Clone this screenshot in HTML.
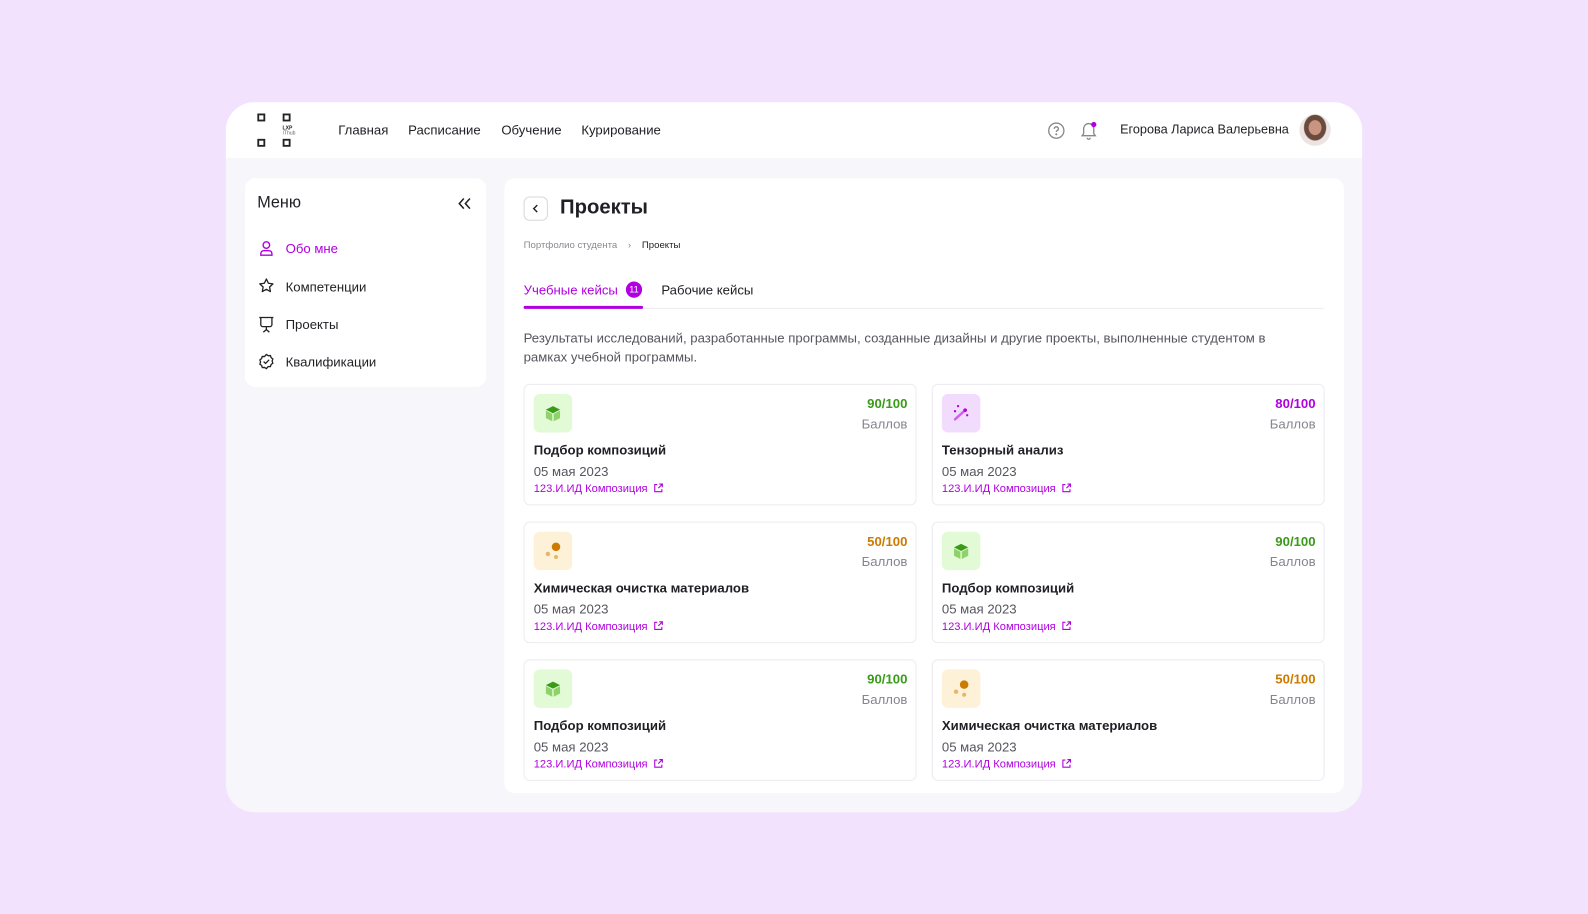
<!DOCTYPE html>
<html><head><meta charset="utf-8"><style>
*{box-sizing:border-box;margin:0;padding:0}
body{width:1588px;height:913px;background:#f2e2fd;font-family:"Liberation Sans",sans-serif;color:#1f1f24;position:relative;overflow:hidden}
#w{position:absolute;left:0;top:0;width:1568px;height:902px;transform:scale(1.01276);transform-origin:0 0}
.app{position:absolute;left:223px;top:101px;width:1122px;height:701px;background:#f7f7fb;border-radius:28px;overflow:hidden}
.hdr{position:absolute;left:0;top:0;width:1122px;height:55px;background:#fff}
.nav{position:absolute;top:20px;font-size:13px;color:#1f1f24}
.side{position:absolute;left:19px;top:75px;width:238px;height:206px;background:#fff;border-radius:10px}
.main{position:absolute;left:275px;top:75px;width:829px;height:607px;background:#fff;border-radius:10px}
.mi{position:absolute;left:40px;font-size:13px}
.card{position:absolute;width:388px;height:120px;border:1px solid #ececf1;border-radius:6px;background:#fff}
.ic{position:absolute;left:9px;top:9px;width:38px;height:38px;border-radius:6px}
.sc{position:absolute;right:8px;top:11px;font-size:13px;font-weight:bold;text-align:right}
.bl{position:absolute;right:8px;top:31px;font-size:13px;color:#85858f}
.tt{position:absolute;left:9px;top:57px;font-size:13px;font-weight:bold}
.dt{position:absolute;left:9px;top:78px;font-size:13px;color:#55555d}
.lk{position:absolute;left:9px;top:97px;font-size:11px;color:#b000e0}
.lk svg{vertical-align:-1px;margin-left:3px}
</style></head><body>
<svg width="0" height="0" style="position:absolute"><defs>
<symbol id="cube" viewBox="0 0 38 38"><path d="M19 12l7 3.5-7 3.5-7-3.5z" fill="#3a9a1a"/><path d="M12 16.5l6.3 3.2v7.3L12 23.8z" fill="#8fd26a"/><path d="M26 16.5l-6.3 3.2v7.3l6.3-3.2z" fill="#8fd26a"/></symbol>
<symbol id="dots" viewBox="0 0 38 38"><circle cx="22" cy="15" r="4.2" fill="#cc7a00"/><circle cx="14" cy="22" r="2.2" fill="#e8b66a"/><circle cx="22" cy="25" r="2" fill="#e8b66a"/></symbol>
<symbol id="wand" viewBox="0 0 38 38"><path d="M13 25l10-9" stroke="#d060f0" stroke-width="2.5" stroke-linecap="round"/><circle cx="23" cy="16" r="1.8" fill="#b000e0"/><rect x="15" y="11" width="2" height="2" fill="#b000e0"/><rect x="12" y="16" width="2" height="2" fill="#b000e0"/><rect x="24" y="20" width="2" height="2" fill="#b000e0"/></symbol>
<symbol id="ext" viewBox="0 0 10 10"><path d="M4 1.5H1.5v7h7V6M6 1h3v3M9 1L5 5" fill="none" stroke="#b000e0" stroke-width="1.1"/></symbol>
</defs></svg>
<div id="w">
<div class="app">
 <div class="hdr">
  <svg style="position:absolute;left:30px;top:10px" width="50" height="36" viewBox="0 0 50 36" fill="none" stroke="#222" stroke-width="1.8"><rect x="2" y="2" width="6" height="6"/><rect x="27" y="2" width="6" height="6"/><rect x="2" y="27" width="6" height="6"/><rect x="27" y="27" width="6" height="6"/><text x="26" y="17" font-size="5" font-family="Liberation Sans" fill="#222" stroke="none" font-weight="bold">LXP</text><text x="26" y="22" font-size="5" font-family="Liberation Sans" fill="#666" stroke="none">IThub</text></svg>
  <div class="nav" style="left:111px">Главная</div>
  <div class="nav" style="left:180px">Расписание</div>
  <div class="nav" style="left:272px">Обучение</div>
  <div class="nav" style="left:351px">Курирование</div>
  <svg style="position:absolute;left:811px;top:19px" width="18" height="18" viewBox="0 0 18 18" fill="none" stroke="#888" stroke-width="1.3"><circle cx="9" cy="9" r="7.5"/><path d="M7 7.2a2 2 0 1 1 2.6 1.9c-.5.2-.6.6-.6 1.2"/><circle cx="9" cy="12.6" r=".4" fill="#888"/></svg>
  <svg style="position:absolute;left:843px;top:18px" width="18" height="20" viewBox="0 0 18 20" fill="none" stroke="#888" stroke-width="1.3"><path d="M4 13V8a5 5 0 0 1 10 0v5l1.5 2h-13z"/><path d="M7.5 17a1.5 1.5 0 0 0 3 0"/><circle cx="14" cy="4" r="2.6" fill="#b000e0" stroke="none"/></svg>
  <div class="nav" style="left:883px;top:20px;font-size:12.5px">Егорова Лариса Валерьевна</div>
  <div style="position:absolute;left:1060px;top:12px;width:31px;height:31px;border-radius:50%;background:radial-gradient(ellipse at 50% 42%,#c99480 0 28%,#6b4a3e 30% 48%,#ece4e2 52%)"></div>
 </div>
 <div class="side">
  <div style="position:absolute;left:12px;top:16px;font-size:16px">Меню</div>
  <svg style="position:absolute;left:210px;top:19px" width="14" height="12" viewBox="0 0 14 12" fill="none" stroke="#222" stroke-width="1.5"><path d="M6 1L1.5 6 6 11M12 1L7.5 6 12 11"/></svg>
  <svg style="position:absolute;left:13px;top:61px" width="16" height="16" viewBox="0 0 16 16" fill="none" stroke="#b000e0" stroke-width="1.4"><circle cx="8" cy="5" r="3.2"/><path d="M2.5 15v-1.5a3 3 0 0 1 3-3h5a3 3 0 0 1 3 3V15z"/></svg>
  <div class="mi" style="top:62px;color:#b000e0">Обо мне</div>
  <svg style="position:absolute;left:13px;top:98px" width="16" height="16" viewBox="0 0 16 16" fill="none" stroke="#222" stroke-width="1.3"><path d="M8 1.5l2 4.2 4.5.6-3.3 3.1.8 4.5L8 11.7 4 13.9l.8-4.5L1.5 6.3 6 5.7z" stroke-linejoin="round"/></svg>
  <div class="mi" style="top:100px">Компетенции</div>
  <svg style="position:absolute;left:13px;top:136px" width="16" height="17" viewBox="0 0 16 17" fill="none" stroke="#222" stroke-width="1.3"><path d="M1 1.5h14M2.5 1.5v7a2 2 0 0 0 2 2h7a2 2 0 0 0 2-2v-7M8 10.5v3M5 16l3-2.5 3 2.5"/></svg>
  <div class="mi" style="top:137px">Проекты</div>
  <svg style="position:absolute;left:13px;top:173px" width="16" height="16" viewBox="0 0 16 16" fill="none" stroke="#222" stroke-width="1.3"><path d="M8 1l1.8 1.2 2.2-.1.7 2 1.7 1.4-.7 2 .7 2.1-1.7 1.3-.7 2.1-2.2-.1L8 15l-1.8-1.2-2.2.1-.7-2.1L1.6 10.5l.7-2.1-.7-2 1.7-1.4.7-2 2.2.1z"/><path d="M5.3 8l1.9 1.9 3.5-3.6"/></svg>
  <div class="mi" style="top:174px">Квалификации</div>
 </div>
 <div class="main">
  <div style="position:absolute;left:19px;top:18px;width:24px;height:24px;border:1px solid #d8d8de;border-radius:6px"><svg style="position:absolute;left:7px;top:6px" width="8" height="10" viewBox="0 0 8 10" fill="none" stroke="#222" stroke-width="1.4"><path d="M5.5 1.5L2 5l3.5 3.5"/></svg></div>
  <div style="position:absolute;left:55px;top:18px;font-size:20px;font-weight:bold">Проекты</div>
  <div style="position:absolute;left:19px;top:61px;font-size:9.5px;color:#8a8a92">Портфолио студента &nbsp;&nbsp;&nbsp;›&nbsp;&nbsp;&nbsp; <span style="color:#222">Проекты</span></div>
  <div style="position:absolute;left:19px;top:103px;font-size:13px;color:#b000e0">Учебные кейсы</div>
  <div style="position:absolute;left:120px;top:102px;width:16px;height:16px;border-radius:50%;background:#b000e0;color:#fff;font-size:9px;text-align:center;line-height:16px">11</div>
  <div style="position:absolute;left:155px;top:103px;font-size:13px">Рабочие кейсы</div>
  <div style="position:absolute;left:19px;top:128px;width:790px;height:1px;background:#ececf1"></div>
  <div style="position:absolute;left:19px;top:126px;width:118px;height:3px;background:#b000e0;border-radius:2px"></div>
  <div style="position:absolute;left:19px;top:148px;width:760px;font-size:13px;line-height:19px;color:#55555d">Результаты исследований, разработанные программы, созданные дизайны и другие проекты, выполненные студентом в рамках учебной программы.</div>
 </div>
</div>
<div class="card" style="left:517px;top:379px"><div class="ic" style="background:#e2fad6"><svg width="38" height="38"><use href="#cube"/></svg></div><div class="sc" style="color:#3a9a1a">90/100</div><div class="bl">Баллов</div><div class="tt">Подбор композиций</div><div class="dt">05 мая 2023</div><div class="lk">123.И.ИД Композиция <svg width="10" height="10"><use href="#ext"/></svg></div></div>
<div class="card" style="left:920px;top:379px"><div class="ic" style="background:#f2dcfd"><svg width="38" height="38"><use href="#wand"/></svg></div><div class="sc" style="color:#b000e0">80/100</div><div class="bl">Баллов</div><div class="tt">Тензорный анализ</div><div class="dt">05 мая 2023</div><div class="lk">123.И.ИД Композиция <svg width="10" height="10"><use href="#ext"/></svg></div></div>
<div class="card" style="left:517px;top:515px"><div class="ic" style="background:#fdf1d8"><svg width="38" height="38"><use href="#dots"/></svg></div><div class="sc" style="color:#cc7a00">50/100</div><div class="bl">Баллов</div><div class="tt">Химическая очистка материалов</div><div class="dt">05 мая 2023</div><div class="lk">123.И.ИД Композиция <svg width="10" height="10"><use href="#ext"/></svg></div></div>
<div class="card" style="left:920px;top:515px"><div class="ic" style="background:#e2fad6"><svg width="38" height="38"><use href="#cube"/></svg></div><div class="sc" style="color:#3a9a1a">90/100</div><div class="bl">Баллов</div><div class="tt">Подбор композиций</div><div class="dt">05 мая 2023</div><div class="lk">123.И.ИД Композиция <svg width="10" height="10"><use href="#ext"/></svg></div></div>
<div class="card" style="left:517px;top:651px"><div class="ic" style="background:#e2fad6"><svg width="38" height="38"><use href="#cube"/></svg></div><div class="sc" style="color:#3a9a1a">90/100</div><div class="bl">Баллов</div><div class="tt">Подбор композиций</div><div class="dt">05 мая 2023</div><div class="lk">123.И.ИД Композиция <svg width="10" height="10"><use href="#ext"/></svg></div></div>
<div class="card" style="left:920px;top:651px"><div class="ic" style="background:#fdf1d8"><svg width="38" height="38"><use href="#dots"/></svg></div><div class="sc" style="color:#cc7a00">50/100</div><div class="bl">Баллов</div><div class="tt">Химическая очистка материалов</div><div class="dt">05 мая 2023</div><div class="lk">123.И.ИД Композиция <svg width="10" height="10"><use href="#ext"/></svg></div></div>
</div>
</body></html>
